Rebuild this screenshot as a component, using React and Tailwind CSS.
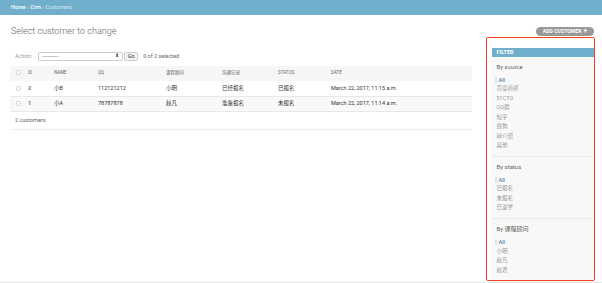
import React from 'react'

const rows = [
	{ id: 2, name: '小B', qq: '112121212', consultant: '小明', record: '已经报名', status: '已报名', date: 'March 22, 2017, 11:15 a.m.' },
	{ id: 1, name: '小A', qq: '78787878', consultant: '赵凡', record: '准备报名', status: '未报名', date: 'March 22, 2017, 11:14 a.m.' },
]

const filters = [
	{ title: 'By source', items: ['All', '百度商桥', '51CTO', 'QQ群', '知乎', '搜狗', '转介绍', '其他'] },
	{ title: 'By status', items: ['All', '已报名', '未报名', '已退学'] },
	{ title: 'By 课程顾问', items: ['All', '小明', '赵凡', '赵君'] },
]

const Checkbox = () => (
	<span className="inline-block w-[5px] h-[5px] rounded-[1.5px] border-[0.5px] border-[#d0d0d0] bg-white align-middle" />
)

const App = () => {
	return (
		<div className="h-[283px] w-[602px] overflow-hidden bg-white flex flex-col font-['Roboto','Noto_Sans_CJK_SC',sans-serif]">
			{/* Breadcrumbs */}
			<div className="h-[15px] shrink-0 bg-[#70aecb] pl-[11px] flex items-center text-[5.5px] text-[#d6e8f0]">
				<span className="text-white font-medium">Home</span>
				<span className="mx-[1.5px]">›</span>
				<span className="text-white font-medium">Crm</span>
				<span className="mx-[1.5px]">›</span>
				<span>Customers</span>
			</div>

			<div className="flex-1 pl-[10px] pr-[7px] flex flex-col">
				{/* Title row */}
				<div className="h-[22px] shrink-0 flex justify-between items-start">
					<h1 className="mt-[11px] pl-[1px] text-[9px] leading-[10px] font-light text-[#666]">Select customer to change</h1>
					<button className="mt-[12px] mr-[1px] h-[9px] w-[58px] rounded-full bg-[#999] text-white text-[5px] font-bold tracking-[0.1px] flex items-center justify-center gap-[2px]">
						ADD CUSTOMER
						<span className="text-[6.5px] leading-none">+</span>
					</button>
				</div>

				<div className="flex-1 flex justify-between">
					{/* Changelist */}
					<div className="w-[462px] pt-[15px]">
						<div className="h-[9px] flex items-center text-[5.5px] text-[#999] pl-[5px]">
							<span>Action:</span>
							<div className="ml-[6px] w-[85px] h-[9px] border-[0.5px] border-[#ccc] rounded-[2px] bg-white flex items-center justify-between px-[3px] text-[#333]">
								<span className="tracking-[0.3px]">---------</span>
								<span className="text-[4.5px] leading-none">⬍</span>
							</div>
							<div className="ml-[1px] w-[14px] h-[9px] border-[0.5px] border-[#ccc] rounded-[2px] bg-[#f4f4f4] flex items-center justify-center text-[#333]">Go</div>
							<span className="ml-[5px] text-[#666]">0 of 2 selected</span>
						</div>

						<table className="mt-[5px] w-[462px] table-fixed border-collapse text-[5.5px] text-[#333]">
							<colgroup>
								<col className="w-[14px]" />
								<col className="w-[26px]" />
								<col className="w-[44px]" />
								<col className="w-[68px]" />
								<col className="w-[56px]" />
								<col className="w-[56px]" />
								<col className="w-[53px]" />
								<col />
							</colgroup>
							<thead>
								<tr className="h-[15px] bg-[#f6f6f6] text-[4.5px] text-[#666] text-left">
									<th className="pl-[6px] font-normal"><Checkbox /></th>
									<th className="pl-[4px] font-normal">ID</th>
									<th className="pl-[4px] font-normal">NAME</th>
									<th className="pl-[4px] font-normal">QQ</th>
									<th className="pl-[4px] font-normal">课程顾问</th>
									<th className="pl-[4px] font-normal">沟通记录</th>
									<th className="pl-[4px] font-normal">STATUS</th>
									<th className="pl-[4px] font-normal">DATE</th>
								</tr>
							</thead>
							<tbody>
								{rows.map((r, i) => (
									<tr key={r.id} className={`h-[15px] border-b-[0.5px] border-[#e8e8e8] ${i % 2 ? 'bg-[#f9f9f9]' : 'bg-white'}`}>
										<td className="pl-[6px]"><Checkbox /></td>
										<td className="pl-[4px] font-bold text-[#447e9b]">{r.id}</td>
										<td className="pl-[4px]">{r.name}</td>
										<td className="pl-[4px]">{r.qq}</td>
										<td className="pl-[4px]">{r.consultant}</td>
										<td className="pl-[4px]">{r.record}</td>
										<td className="pl-[4px]">{r.status}</td>
										<td className="pl-[4px]">{r.date}</td>
									</tr>
								))}
							</tbody>
						</table>

						<div className="h-[18px] border-b-[0.5px] border-[#eee] flex items-center pl-[5px] text-[5.5px] text-[#666]">
							2 customers
						</div>
					</div>

					{/* Filter, outlined */}
					<div className="w-[109px] h-[244px] border-[1.5px] border-[#f5411f] rounded-[2px] pt-[9.5px] pl-[4.5px] flex flex-col overflow-hidden bg-white">
						<div className="flex-1 bg-[#f8f8f8]">
							<div className="h-[9px] bg-[#70aecb] pl-[5px] flex items-center text-[5.5px] font-bold text-white">FILTER</div>
							{filters.map((f, gi) => (
								<div key={f.title} className={`pt-[6px] pb-[5px] ${gi < filters.length - 1 ? 'border-b-[1px] border-[#eaeaea]' : ''}`}>
									<h3 className="h-[8px] leading-[8px] pl-[5px] text-[6px] text-[#666]">{f.title}</h3>
									<ul className="mt-[4.5px] text-[5.5px]">
										{f.items.map((item, ii) => (
											<li
												key={item}
												className={`h-[9.45px] leading-[9.45px] flex items-center ${ii === 0 ? 'pl-[3px]' : 'pl-[5px] text-[#999]'}`}
											>
												{ii === 0 ? (
													<span className="border-l-[2px] border-[#e4e4e4] pl-[2px] h-[6px] leading-[6px] text-[#5b80b2] font-medium">{item}</span>
												) : (
													item
												)}
											</li>
										))}
									</ul>
								</div>
							))}
						</div>
					</div>
				</div>

				<div className="h-[2px] shrink-0 -mx-[10px] bg-gradient-to-b from-white to-[#e2e2e2]" />
			</div>
		</div>
	)
}

export default App
